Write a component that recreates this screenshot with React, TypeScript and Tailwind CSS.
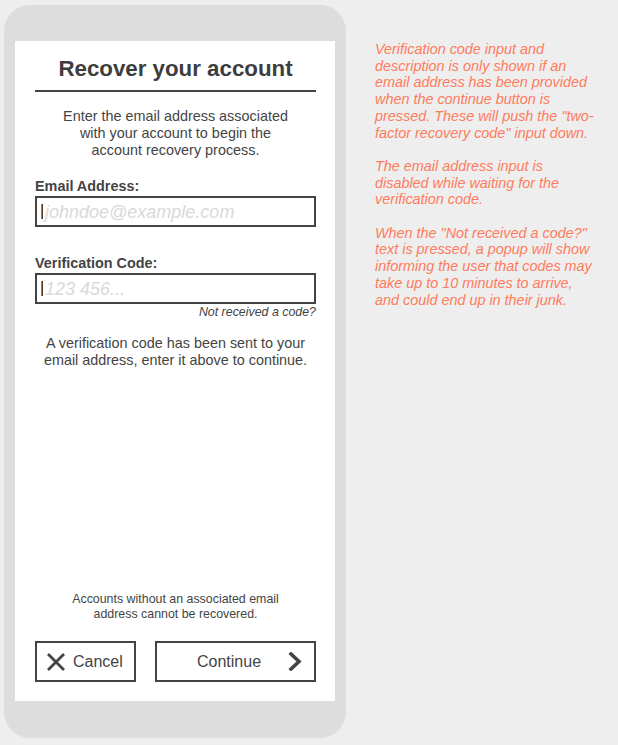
const font = { fontFamily: '"Liberation Sans", Arial, sans-serif' }

function Caret() {
  return (
    <div className="flex h-[15px] shrink-0">
      <div className="w-px bg-[#d2691e]" />
      <div className="w-px bg-[#5a3a1e]" />
    </div>
  )
}

function Field({ label, placeholder }: { label: string; placeholder: string }) {
  return (
    <div className="flex flex-col">
      <label className="text-[14.4px] font-bold leading-[17px] text-[#444]">{label}</label>
      <div className="mt-[1px] flex h-[31px] items-center gap-[2px] border-2 border-[#444] pl-[4px]">
        <Caret />
        <span className="text-[18px] italic leading-none text-[#d9d9d9]">{placeholder}</span>
      </div>
    </div>
  )
}

export default function App() {
  return (
    <div className="flex h-[745px] w-[618px] bg-[#eeeeee]" style={font}>
      <div className="ml-[4px] mt-[5px] flex h-[733px] w-[342px] shrink-0 flex-col rounded-[26px] bg-[#dddddd] px-[11px] pt-[36px]">
        <div className="flex h-[660px] w-[320px] flex-col bg-white pl-[20px] pr-[19px] pt-[15px] text-[#444]">
          <h1 className="text-center text-[22.3px] font-bold leading-[26px] text-[#3d3d3d]">Recover your account</h1>
          <div className="mt-[8px] h-[2px] bg-[#444]" />
          <p className="mt-[16px] text-center text-[14.4px] leading-[17px]">
            Enter the email address associated
            <br />
            with your account to begin the
            <br />
            account recovery process.
          </p>
          <div className="mt-[19px]">
            <Field label="Email Address:" placeholder="johndoe@example.com" />
          </div>
          <div className="mt-[28px]">
            <Field label="Verification Code:" placeholder="123 456..." />
          </div>
          <div className="mt-[1px] text-right text-[12.4px] italic leading-[14px]">Not received a code?</div>
          <p className="mt-[16px] text-center text-[14.4px] leading-[17px]">
            A verification code has been sent to your
            <br />
            email address, enter it above to continue.
          </p>
          <div className="flex-1" />
          <p className="text-center text-[12.4px] leading-[15px]">
            Accounts without an associated email
            <br />
            address cannot be recovered.
          </p>
          <div className="mb-[19px] mt-[19px] flex gap-[19px]">
            <button className="flex h-[41px] w-[101px] items-center gap-[8px] border-2 border-[#444] pl-[10px] text-[16px]">
              <svg width="18" height="18" viewBox="0 0 18 18" className="shrink-0">
                <path d="M2 2 L16 16 M16 2 L2 16" stroke="#444" strokeWidth="2.8" strokeLinecap="square" fill="none" />
              </svg>
              <span>Cancel</span>
            </button>
            <button className="relative flex h-[41px] flex-1 items-center border-2 border-[#444] text-[16px]">
              <span className="ml-[40px]">Continue</span>
              <svg width="14" height="19" viewBox="0 0 14 19" className="absolute right-[12px]">
                <path d="M3 2 L11 9.5 L3 17" stroke="#444" strokeWidth="3.6" strokeLinecap="square" strokeLinejoin="miter" fill="none" />
              </svg>
            </button>
          </div>
        </div>
      </div>
      <div className="ml-[29px] mt-[41px] text-[14.4px] italic leading-[16.7px] text-[#ff7b5c]">
        <p>
          Verification code input and
          <br />
          description is only shown if an
          <br />
          email address has been provided
          <br />
          when the continue button is
          <br />
          pressed. These will push the "two-
          <br />
          factor recovery code" input down.
        </p>
        <p className="mt-[16.7px]">
          The email address input is
          <br />
          disabled while waiting for the
          <br />
          verification code.
        </p>
        <p className="mt-[16.7px]">
          When the "Not received a code?"
          <br />
          text is pressed, a popup will show
          <br />
          informing the user that codes may
          <br />
          take up to 10 minutes to arrive,
          <br />
          and could end up in their junk.
        </p>
      </div>
    </div>
  )
}
